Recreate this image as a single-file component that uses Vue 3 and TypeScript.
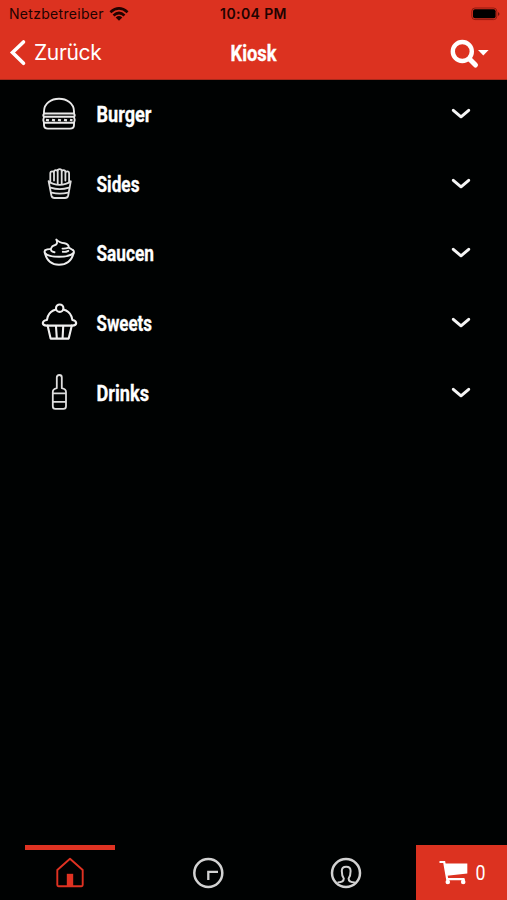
<script setup lang="ts">
type IconName = 'burger' | 'fries' | 'sauce' | 'cupcake' | 'bottle'

interface Category {
  label: string
  icon: IconName
  width: number
}

const categories: Category[] = [
  { label: 'Burger', icon: 'burger', width: 55 },
  { label: 'Sides', icon: 'fries', width: 43 },
  { label: 'Saucen', icon: 'sauce', width: 57.5 },
  { label: 'Sweets', icon: 'cupcake', width: 55.5 },
  { label: 'Drinks', icon: 'bottle', width: 52.5 },
]
</script>

<template>
  <div class="screen">
    <header class="header">
      <div class="status">
        <div class="carrier">
          <span>Netzbetreiber</span>
          <svg width="20" height="14" viewBox="0 0 20 14">
            <g fill="none" stroke="#210300" stroke-width="2.7">
              <path d="M1.4 5.2Q10 -2.3 18.6 5.2" />
              <path d="M4.5 8.4Q10 3.6 15.5 8.4" />
            </g>
            <path d="M6.7 10.5Q10 7.7 13.3 10.5L10 13.8Z" fill="#210300" />
          </svg>
        </div>
        <div class="time">10:04 PM</div>
        <div class="battery">
          <svg width="29" height="14" viewBox="0 0 29 14">
            <rect x=".8" y="1" width="25" height="11.6" rx="3.2" fill="none" stroke="#92190f" />
            <rect x="2" y="2.3" width="22.6" height="9" rx="2" fill="#000" />
            <path d="M27 5Q30 7 27 9Z" fill="#75140d" />
          </svg>
        </div>
      </div>
      <nav class="nav">
        <button class="back" type="button">
          <svg width="17" height="28" viewBox="0 0 17 28">
            <path d="M14.5 3L3.5 13.5L14.5 24.3" fill="none" stroke="#fff" stroke-width="3.6" stroke-linecap="round" />
          </svg>
          <span>Zurück</span>
        </button>
        <h1 class="title">
          <svg width="50" height="34">
            <text class="condensed" x="1.5" y="25" textLength="46" lengthAdjust="spacingAndGlyphs">Kiosk</text>
          </svg>
        </h1>
        <button class="search" type="button">
          <svg width="40" height="30" viewBox="0 0 40 30">
            <circle cx="12.3" cy="12.5" r="9.5" fill="none" stroke="#fff" stroke-width="4.4" />
            <path d="M19.5 20L25.5 26" stroke="#fff" stroke-width="5" stroke-linecap="round" />
            <path d="M28 11H38.6L33.3 16.6Z" fill="#fff" />
          </svg>
        </button>
      </nav>
    </header>

    <main class="list">
      <div v-for="category in categories" :key="category.label" class="row">
        <svg class="icon" width="38" height="40" viewBox="0 0 38 40">
          <g v-if="category.icon === 'burger'" fill="none" stroke="#e9e9e9" stroke-width="1.9" stroke-linejoin="round">
            <path d="M4 19.5V17.5C4 .5 34 .5 34 17.5V19.5Z" />
            <path d="M4 19.5Q2.6 21.2 4 22.8H34Q35.4 21.2 34 19.5" />
            <path d="M6 25.8l3 .6M12 25.8l3 .6M18 25.8l3 .6M24 25.8l3 .6M30 25.8l2.5 .6" stroke-width="2.2" />
            <path d="M4 22.8Q2.6 25.8 4 28.8H34Q35.4 25.8 34 22.8" />
            <path d="M4 28.8V31Q4 34.6 8 34.6H30Q34 34.6 34 31V28.8" />
          </g>
          <g v-else-if="category.icon === 'fries'" fill="none" stroke="#dedede" stroke-width="1.8" stroke-linejoin="round" stroke-linecap="round">
            <path d="M8.6 17.2Q13 20.8 19.6 20.8Q26 20.8 30.8 17.2L28.2 31.5Q27.6 34 25 34H14.5Q12 34 11.4 31.5Z" />
            <path d="M10.5 23.6Q19.7 26.6 29 23.6M11.5 28.6Q19.7 30.6 28.2 28.6" />
            <path d="M10.3 17.5V9.5Q10.3 7.4 12.2 7.4Q14 7.4 14 9.5V16.5M14 8.5Q14 6.2 15.8 6.2Q17.7 6.2 17.7 8.5V16M17.7 14V7.4Q17.7 5.2 19.7 5.2Q21.7 5.2 21.7 7.4V20M17.7 14V20M21.7 8.5Q21.7 6.2 23.5 6.2Q25.4 6.2 25.4 8.5V16.5M25.4 9.5Q25.4 7.4 27.3 7.4Q29.1 7.4 29.1 9.5V17.5" />
          </g>
          <g v-else-if="category.icon === 'sauce'" fill="none" stroke="#ededed" stroke-width="1.9" stroke-linejoin="round" stroke-linecap="round">
            <path d="M5.2 17.3Q4 18.6 5 20.5Q8 31.8 19 31.8Q30.5 31.8 33.5 20.5Q34.6 18 32.8 17" />
            <path d="M5 20Q8 23.8 19 23.8Q30 23.8 33.5 20" />
            <path d="M5.2 17.3Q7.5 15.8 11 16.2M14.5 19.3Q10 18.5 11 15.5Q12 12.8 14.5 12.3Q18.6 10.8 16.3 6.5Q19 9.8 24.5 10.2Q29 11.2 28.8 14.6L32.8 17M28 14.9Q25.5 15.8 22.5 15.6M22.8 18.8Q25.5 19.2 28.3 17.8" />
          </g>
          <g v-else-if="category.icon === 'cupcake'" fill="none" stroke="#f0f0f0" stroke-width="2.1" stroke-linejoin="round" stroke-linecap="round">
            <circle cx="19.7" cy="5.2" r="3.7" />
            <path d="M16 6.5Q10 8 7.8 13.5L6.9 17Q2.8 17.7 2.8 20.2Q3 22.6 6.5 22.6H32.5Q36 22.6 36.2 20.2Q36.2 17.7 32.4 17L31.5 13.5Q29.2 8 23.4 6.5" />
            <path d="M7.6 22.6L10.6 35.6H28.7L31.8 22.6M16 23.5L16.8 35M23.2 23.5L22.6 35" />
          </g>
          <g v-else fill="none" stroke="#dedede" stroke-width="1.8" stroke-linejoin="round">
            <path d="M16.8 15.2V4.4Q16.8 2 19.3 2Q21.8 2 21.8 4.4V15.2Q26 16 26 19V33.2Q26 35.8 23.5 35.8H15.3Q12.8 35.8 12.8 33.2V19Q12.8 16 16.8 15.2Z" />
            <path d="M12.8 20.4H26M12.8 28.9H26" />
          </g>
        </svg>
        <svg class="label" :width="category.width + 4" height="34">
          <text class="condensed" x="1.5" y="25" :textLength="category.width" lengthAdjust="spacingAndGlyphs">{{ category.label }}</text>
        </svg>
        <svg class="chevron" width="20" height="12" viewBox="0 0 20 12">
          <path d="M2.3 2.3L10 8.8L17.7 2.3" fill="none" stroke="#f5f5f5" stroke-width="3" stroke-linecap="round" stroke-linejoin="round" />
        </svg>
      </div>
    </main>

    <footer class="tabs">
      <div class="tab active">
        <svg width="32" height="32" viewBox="0 0 32 32">
          <path d="M3.3 13L16 1.7L28.7 13V28Q28.7 29.2 27.5 29.2H4.5Q3.3 29.2 3.3 28Z" fill="none" stroke="#df3222" stroke-width="1.9" stroke-linejoin="round" />
          <path d="M12.8 16.8H19.2V29H12.8Z" fill="#df3222" />
        </svg>
      </div>
      <div class="tab">
        <svg width="32" height="32" viewBox="0 0 32 32">
          <g fill="none" stroke="#d2d2d2">
            <circle cx="16.3" cy="16" r="14" stroke-width="2.5" />
            <path d="M16.3 23V14.8H26" stroke-width="2.3" />
          </g>
        </svg>
      </div>
      <div class="tab">
        <svg width="32" height="32" viewBox="0 0 32 32">
          <g fill="none" stroke="#d2d2d2">
            <circle cx="16" cy="16" r="14" stroke-width="2.5" />
            <path d="M7.5 25.4Q13.8 25.4 13.8 21.5Q11.8 19 11.8 14Q11.8 9.8 16.2 9.8Q20.6 9.8 20.6 14Q20.6 19 18.6 21.5Q18.6 25.4 24.9 25.4" stroke-width="2" />
          </g>
        </svg>
      </div>
      <button class="cart" type="button">
        <svg width="30" height="26" viewBox="0 0 30 26">
          <path d="M.5 2H5.2L8.2 19.2H25.5" fill="none" stroke="#fff" stroke-width="2.2" />
          <path d="M5.3 3.5H28.3V13.5L8 15.8Z" fill="#fff" />
          <circle cx="8.8" cy="22" r="2.3" fill="#fff" />
          <circle cx="24.2" cy="22" r="2.3" fill="#fff" />
          <path d="M24.2 19V22" stroke="#fff" stroke-width="3" />
        </svg>
        <svg width="13" height="30">
          <text class="count" x="1.5" y="22" textLength="10" lengthAdjust="spacingAndGlyphs">0</text>
        </svg>
      </button>
    </footer>
  </div>
</template>

<style>
body {
  margin: 0;
  background: #000;
}
</style>

<style scoped>
.screen {
  display: flex;
  flex-direction: column;
  width: 507px;
  height: 900px;
  overflow: hidden;
  background: #000202;
  color: #fff;
  font-family: Inter, "Liberation Sans", sans-serif;
}

button {
  margin: 0;
  padding: 0;
  border: 0;
  background: none;
  color: inherit;
  font: inherit;
}

svg {
  display: block;
  flex: none;
  overflow: visible;
}

.header {
  box-sizing: border-box;
  height: 79.5px;
  flex: none;
  background: #dc3220;
  border-bottom: 1px solid #a92a1c;
}

.status {
  display: grid;
  grid-template-columns: 1fr auto 1fr;
  align-items: center;
  height: 27px;
  padding: 0 7px 0 9px;
  color: #210300;
  font-size: 14px;
}

.carrier {
  display: flex;
  align-items: center;
  gap: 5px;
  letter-spacing: 0.3px;
}

.time {
  font-weight: 600;
  letter-spacing: 0.4px;
  margin-right: 2px;
}

.battery {
  display: flex;
  justify-content: flex-end;
}

.nav {
  display: grid;
  grid-template-columns: 1fr auto 1fr;
  align-items: center;
  height: 51px;
  padding: 0 17px 0 9px;
}

.back {
  display: flex;
  align-items: center;
  gap: 8px;
  font-size: 21px;
  letter-spacing: -0.35px;
}

.title {
  margin: 0 -4px 0 4px;
}

.search {
  justify-self: end;
  padding-top: 3px;
}

.condensed {
  fill: #fff;
  stroke: #fff;
  stroke-width: 0.3px;
  font-family: Roboto, sans-serif;
  font-size: 22px;
  font-weight: 700;
}

.list {
  flex: 1;
}

.row {
  display: flex;
  align-items: center;
  height: 69.6px;
  padding: 0 36px 0 40px;
}

.label {
  margin-left: 17px;
}

.chevron {
  margin-left: auto;
}

.tabs {
  display: grid;
  grid-template-columns: 1fr 1fr 1fr 91.5px;
  height: 55px;
  flex: none;
}

.tab {
  display: flex;
  flex-direction: column;
  align-items: center;
  padding-top: 12px;
}

.active {
  padding: 0 0 0 2px;
}

.active::before {
  content: "";
  width: 90px;
  height: 5px;
  margin-bottom: 7px;
  background: #df3222;
}

.cart {
  display: flex;
  align-items: center;
  justify-content: center;
  gap: 5px;
  padding-left: 3px;
  background: #dc3220;
}

.count {
  fill: #fff;
  font-family: Roboto, sans-serif;
  font-size: 20px;
}
</style>
